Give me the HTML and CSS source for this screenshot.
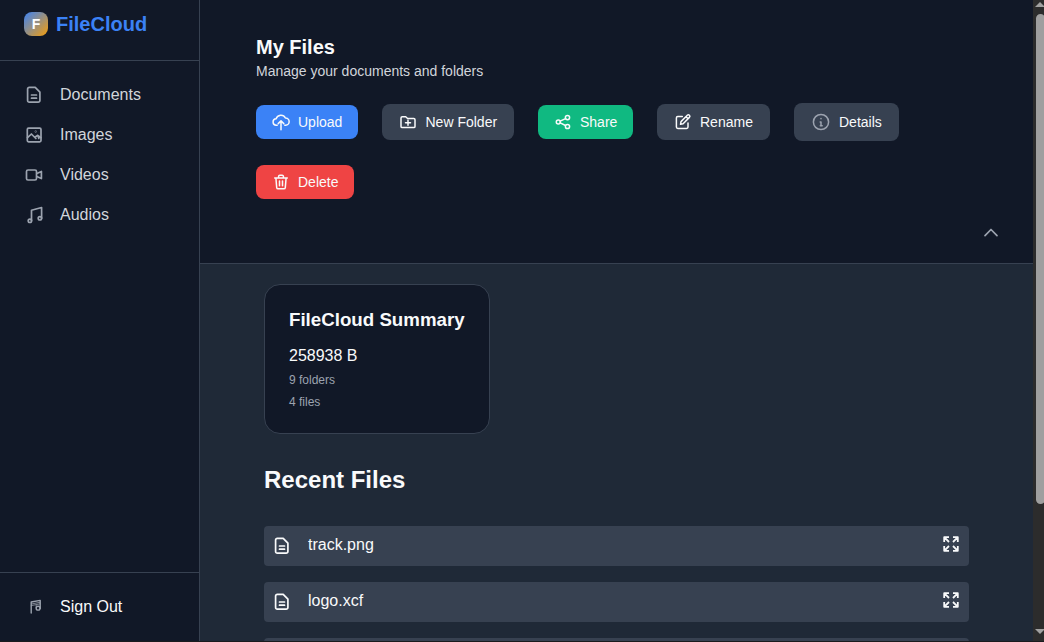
FILE: index.html
```html
<!DOCTYPE html>
<html lang="en">
<head>
<meta charset="utf-8">
<title>FileCloud</title>
<link rel="stylesheet" href="styles.css">
</head>
<body>
<svg class="defs" aria-hidden="true">
  <symbol id="doc" viewBox="0 0 20 20"><path d="M5.300 2.300h5.900l4.700 4.900v8.300a1.700 1.700 0 0 1-1.700 1.700H5.300a1.700 1.700 0 0 1-1.700-1.700V4a1.700 1.700 0 0 1 1.700-1.700zM7.500 10h5M7.500 13.200h5"/></symbol>
  <symbol id="expand" viewBox="0 0 18 18"><path d="M7 7 2.700 2.700M2.200 7V2.200H7M11 7l4.300-4.300M11 2.200h4.800V7M7 11l-4.300 4.300M2.200 11v4.800H7M11 11l4.300 4.300M15.800 11v4.800H11"/></symbol>
</svg>
<div class="app">
  <aside class="sidebar">
    <div class="brand"><span class="logo">F</span><span class="brand-name">FileCloud</span></div>
    <nav class="nav">
      <a class="nav-item"><svg class="icon"><use href="#doc"/></svg>Documents</a>
      <a class="nav-item"><svg class="icon" viewBox="0 0 20 20"><rect x="3.300" y="3.100" width="13.700" height="13.800" rx="1.300"/><path d="M3.500 12.700 7.400 9l4.500 4.500M10.900 12.300l2.900-2 3 2.400M14 10.800l.8 2.600"/><circle cx="11.700" cy="6.600" r=".2"/></svg>Images</a>
      <a class="nav-item"><svg class="icon" viewBox="0 0 20 20"><rect x="2.500" y="5" width="10" height="10" rx="1.500"/><path d="m12.800 8.500 4.600-2.100v7.200l-4.600-2.100"/></svg>Videos</a>
      <a class="nav-item"><svg class="icon" viewBox="0 0 20 20"><path d="M7.500 15.600V5.200l10.100-2.700v10.800"/><circle cx="5.900" cy="15.800" r="1.700"/><circle cx="15.900" cy="13.300" r="1.700"/></svg>Audios</a>
    </nav>
    <div class="signout"><svg class="icon" viewBox="0 0 20 20"><path d="M7.200 16V5l9-1.600v8"/><path class="thin" d="M7.200 8.600l9-1.800M7.500 7l8.500-1.700M12.200 11V8.500"/><circle cx="14.100" cy="11.200" r="1.900"/></svg>Sign Out</div>
  </aside>
  <main class="main">
    <header class="header">
      <h1 class="title">My Files</h1>
      <p class="subtitle">Manage your documents and folders</p>
      <div class="actions">
        <button class="btn upload"><svg class="icon" viewBox="0 0 18 18"><path d="M5.200 12.200H4.500a3.200 3.200 0 0 1-.4-6.400A5 5 0 0 1 13.400 5a3.600 3.600 0 0 1 .3 7.200h-.9M9 16.700V8M6.200 10.600 9 7.800l2.800 2.800"/></svg>Upload</button>
        <button class="btn folder"><svg class="icon" viewBox="0 0 18 18"><path d="M3.200 3.800h3.500l1.900 1.700h6.200a1.200 1.200 0 0 1 1.200 1.200v6.700a1.200 1.200 0 0 1-1.200 1.200H3.200A1.200 1.200 0 0 1 2 13.400V5a1.200 1.200 0 0 1 1.200-1.200zM9 7.200v5M6.500 9.700h5"/></svg>New Folder</button>
        <button class="btn share"><svg class="icon" viewBox="0 0 18 18"><circle cx="4.300" cy="9" r="2"/><circle cx="13.500" cy="4.600" r="2.100"/><circle cx="13.500" cy="13.500" r="2.100"/><path d="m6.200 8.100 5.300-2.500M6.200 9.900l5.300 2.600"/></svg>Share</button>
        <button class="btn rename"><svg class="icon" viewBox="0 0 18 18"><path d="M8.300 3.500H3.800A1.400 1.400 0 0 0 2.400 4.900v9.100a1.400 1.400 0 0 0 1.400 1.400h8.800A1.400 1.400 0 0 0 14 14v-4M6.500 11.300l.5-2.700 6.300-6.300a1.400 1.400 0 0 1 2.100 2.100l-6.300 6.300zM12 3.700l2.100 2.100"/></svg>Rename</button>
        <button class="btn details"><svg class="icon" viewBox="0 0 18 18"><circle cx="9" cy="9" r="7.600"/><path d="M9 5.500v.3M8.200 8.900H9v3.800M8.300 12.700h1.900"/></svg>Details</button>
        <button class="btn delete"><svg class="icon" viewBox="0 0 18 18"><path d="M2.700 5h12.600M3.900 5l.8 9.600a1.400 1.400 0 0 0 1.400 1.200h5.800a1.400 1.400 0 0 0 1.400-1.200l.8-9.600M6.600 4.800V3.300a1.200 1.200 0 0 1 1.200-1.100h2.400a1.200 1.200 0 0 1 1.200 1.100v1.500M7.500 8v4.700M10.500 8v4.700"/></svg>Delete</button>
      </div>
      <div class="collapse"><svg class="chevron" viewBox="0 0 16 10"><path d="M2 7.700 8 1.500l6 6.200"/></svg></div>
    </header>
    <section class="content">
      <div class="summary">
        <h2 class="summary-title">FileCloud Summary</h2>
        <p class="size">258938 B</p>
        <p class="count">9 folders</p>
        <p class="count">4 files</p>
      </div>
      <h2 class="recent-title">Recent Files</h2>
      <div class="files">
        <div class="file"><svg class="icon"><use href="#doc"/></svg><span class="file-name">track.png</span><svg class="expand"><use href="#expand"/></svg></div>
        <div class="file"><svg class="icon"><use href="#doc"/></svg><span class="file-name">logo.xcf</span><svg class="expand"><use href="#expand"/></svg></div>
        <div class="file"></div>
      </div>
    </section>
  </main>
  <div class="scrollbar"><span class="arrow up"></span><span class="thumb"></span><span class="arrow down"></span></div>
</div>
</body>
</html>
```

FILE: styles.css
```css
* { box-sizing: border-box; }
body {
  margin: 0;
  height: 642px;
  overflow: hidden;
  background: #1a1b1e;
  color: #f9fafb;
  font-family: "Liberation Sans", Arial, sans-serif;
}
h1, h2, p { margin: 0; }
.defs { display: none; }
svg { fill: none; stroke: currentColor; stroke-width: 1.5; stroke-linecap: round; stroke-linejoin: round; flex: none; }
.app { display: flex; height: 641px; overflow: hidden; }

.sidebar {
  width: 200px;
  flex: none;
  display: flex;
  flex-direction: column;
  background: #111827;
  border-right: 1px solid #374151;
}
.brand {
  display: flex;
  align-items: center;
  gap: 8px;
  height: 61px;
  padding: 0 24px 12px;
  border-bottom: 1px solid #374151;
}
.logo {
  width: 24px;
  height: 24px;
  border-radius: 8px;
  background: linear-gradient(135deg, #3b82f6, #f59e0b);
  color: #fff;
  font-size: 14px;
  font-weight: 700;
  line-height: 24px;
  text-align: center;
}
.brand-name { color: #3b82f6; font-size: 20px; font-weight: 700; }
.nav { flex: 1; padding-top: 14px; }
.nav-item, .signout {
  display: flex;
  align-items: center;
  gap: 16px;
  height: 40px;
  padding-left: 24px;
  font-size: 16px;
  color: #d1d5db;
}
.nav-item .icon, .signout .icon { width: 20px; height: 20px; color: #9ca3af; stroke-width: 1.7; }
.signout { height: 69px; border-top: 1px solid #374151; color: #f9fafb; }
.signout .icon { stroke-width: 1.4; }
.thin { stroke-width: .8; }

.main { flex: 1; min-width: 0; background: #1f2937; }
.header { height: 264px; padding: 36px 34px 0 56px; background: #111827; border-bottom: 1px solid #374151; }
.title { font-size: 20px; line-height: 23px; }
.subtitle { margin-top: 4px; font-size: 14px; line-height: 16px; color: #d1d5db; }
.actions { display: flex; flex-wrap: wrap; align-items: center; gap: 24px; margin-top: 24px; }
.btn {
  display: flex;
  align-items: center;
  gap: 8px;
  height: 34px;
  padding: 0 16px;
  border: 0;
  border-radius: 8px;
  color: #f9fafb;
  background: #374151;
  font: 14px "Liberation Sans", Arial, sans-serif;
}
.btn .icon { width: 18px; height: 18px; }
.upload { width: 102px; background: #3b82f6; }
.folder { width: 132px; height: 36px; padding: 0 16px 0 17px; gap: 8.5px; white-space: nowrap; }
.share { width: 95px; background: #10b981; }
.rename { width: 113px; height: 36px; padding-left: 17px; }
.details { width: 105px; height: 38px; padding-left: 18px; gap: 9px; }
.details .icon { color: #9ca3af; }
.delete { width: 98px; background: #ef4444; }
.collapse { display: flex; justify-content: flex-end; margin-top: 29px; }
.chevron { width: 16px; height: 10px; color: #9ca3af; stroke-width: 1.7; }

.content { padding: 20px 64px 0; }
.summary {
  width: 226px;
  height: 150px;
  padding: 24px;
  border: 1px solid #374151;
  border-radius: 16px;
  background: #111827;
}
.summary-title { font-size: 18.72px; line-height: 22px; white-space: nowrap; }
.size { margin-top: 16px; font-size: 16px; line-height: 18px; }
.count { margin-top: 8px; font-size: 12px; line-height: 14px; color: #9ca3af; }
.recent-title { margin-top: 32px; font-size: 24px; line-height: 28px; }
.files { display: flex; flex-direction: column; gap: 16px; margin-top: 32px; }
.file { display: flex; align-items: center; height: 40px; padding: 0 9px 0 8px; border-radius: 4px; background: #374151; }
.file .icon { width: 20px; height: 20px; stroke-width: 1.7; }
.file-name { flex: 1; margin-left: 16px; padding-bottom: 2px; font-size: 16px; line-height: 18px; }
.expand { width: 18px; height: 18px; margin-bottom: 4px; stroke-width: 1.8; stroke-linecap: butt; }

.scrollbar { width: 11px; flex: none; display: flex; flex-direction: column; padding-left: 3px; background: #2c2c2c; overflow: hidden; }
.arrow { width: 0; border: 5px solid transparent; margin-left: -1px; flex: none; }
.up { border-top: 0; border-bottom: 5px solid #a1a1a1; margin-top: 2px; }
.thumb { width: 9px; height: 490px; margin-top: 7px; border-radius: 4.5px; background: #9f9f9f; }
.down { border-bottom: 0; border-top: 5px solid #a1a1a1; margin-top: auto; margin-bottom: 7px; }
```
